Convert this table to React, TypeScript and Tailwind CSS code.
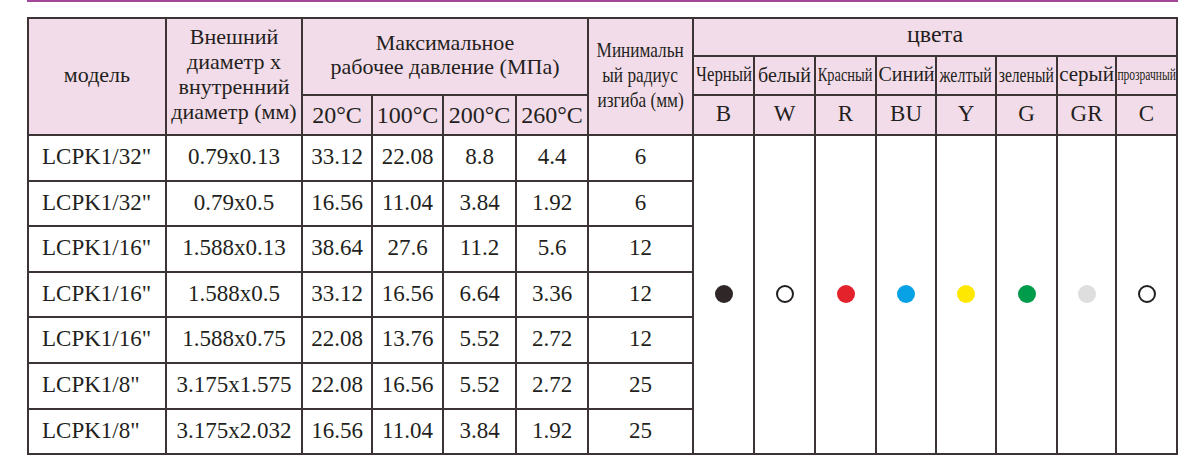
import React from 'react';

const rows = [
    ['LCPK1/32"', '0.79x0.13', '33.12', '22.08', '8.8', '4.4', '6'],
    ['LCPK1/32"', '0.79x0.5', '16.56', '11.04', '3.84', '1.92', '6'],
    ['LCPK1/16"', '1.588x0.13', '38.64', '27.6', '11.2', '5.6', '12'],
    ['LCPK1/16"', '1.588x0.5', '33.12', '16.56', '6.64', '3.36', '12'],
    ['LCPK1/16"', '1.588x0.75', '22.08', '13.76', '5.52', '2.72', '12'],
    ['LCPK1/8"', '3.175x1.575', '22.08', '16.56', '5.52', '2.72', '25'],
    ['LCPK1/8"', '3.175x2.032', '16.56', '11.04', '3.84', '1.92', '25'],
];

const rowHeights = ['h-[46px]', 'h-[45px]', 'h-[46px]', 'h-[45px]', 'h-[46px]', 'h-[46px]', 'h-[45px]'];

const colors = [
    { name: 'Черный', cls: 'text-[21px] scale-x-[0.8]', code: 'B', dot: 'bg-[#2f2727]' },
    { name: 'белый', cls: 'text-[20px] scale-x-[1]', code: 'W', dot: 'bg-white border-2 border-[#231f20]' },
    { name: 'Красный', cls: 'text-[19px] scale-x-[0.76]', code: 'R', dot: 'bg-[#e4222c]' },
    { name: 'Синий', cls: 'text-[21px] scale-x-[0.95]', code: 'BU', dot: 'bg-[#07a2e5]' },
    { name: 'желтый', cls: 'text-[20px] scale-x-[0.8]', code: 'Y', dot: 'bg-[#ffe800]' },
    { name: 'зеленый', cls: 'text-[20px] scale-x-[0.78]', code: 'G', dot: 'bg-[#009b4b]' },
    { name: 'серый', cls: 'text-[21px] scale-x-[1]', code: 'GR', dot: 'bg-[#dedede]' },
    { name: 'прозрачный', cls: 'text-[16px] scale-x-[0.72]', code: 'C', dot: 'bg-white border-2 border-[#231f20]' },
];

const cell = 'border-2 border-[#3b3334] text-center align-middle p-0';
const head = `${cell} bg-[#f3dce9]`;

function Squeeze({ children, cls }: { children: React.ReactNode; cls: string }) {
    return (
        <div className="flex justify-center overflow-visible">
            <span className={`inline-block whitespace-nowrap ${cls}`}>{children}</span>
        </div>
    );
}

export default function App() {
    return (
        <div className="w-[1200px] h-[469px] bg-white font-[family-name:'Liberation_Serif',serif] text-[#231f20] overflow-hidden">
            <div className="ml-[27px] w-[1151px] h-[1.5px] bg-[#a3479a]" />
            <table className="ml-[27px] mt-[15px] w-[1151px] table-fixed border-collapse">
                <colgroup>
                    <col className="w-[138px]" />
                    <col className="w-[136px]" />
                    <col className="w-[70px]" />
                    <col className="w-[71px]" />
                    <col className="w-[73px]" />
                    <col className="w-[72px]" />
                    <col className="w-[105px]" />
                    <col className="w-[61px]" />
                    <col className="w-[61px]" />
                    <col className="w-[61px]" />
                    <col className="w-[60px]" />
                    <col className="w-[60px]" />
                    <col className="w-[61px]" />
                    <col className="w-[59px]" />
                    <col className="w-[61px]" />
                </colgroup>
                <thead>
                    <tr className="h-[38px]">
                        <th rowSpan={3} className={`${head} text-[22px] font-normal pb-[4px]`}>модель</th>
                        <th rowSpan={3} className={`${head} text-[22px] font-normal leading-[25px] pb-[4px]`}>
                            <Squeeze cls="">Внешний</Squeeze>
                            <Squeeze cls="">диаметр х</Squeeze>
                            <Squeeze cls="">внутренний</Squeeze>
                            <Squeeze cls="">диаметр (мм)</Squeeze>
                        </th>
                        <th colSpan={4} rowSpan={2} className={`${head} text-[22px] font-normal leading-[24px] pb-[2px]`}>
                            Максимальное<br />рабочее давление (МПа)
                        </th>
                        <th rowSpan={3} className={`${head} font-normal leading-[25px] pb-[2px]`}>
                            <Squeeze cls="text-[21px] scale-x-[0.82]">Минимальн</Squeeze>
                            <Squeeze cls="text-[21px] scale-x-[0.82]">ый радиус</Squeeze>
                            <Squeeze cls="text-[21px] scale-x-[0.82]">изгиба (мм)</Squeeze>
                        </th>
                        <th colSpan={8} className={`${head} text-[24px] font-normal leading-[28px] pb-[5px]`}>цвета</th>
                    </tr>
                    <tr className="h-[39px]">
                        {colors.map((c) => (
                            <th key={c.name} className={`${head} font-normal`}>
                                <Squeeze cls={c.cls}>{c.name}</Squeeze>
                            </th>
                        ))}
                    </tr>
                    <tr className="h-[40px]">
                        {['20°C', '100°C', '200°C', '260°C'].map((t) => (
                            <th key={t} className={`${head} text-[24px] font-normal`}>
                                <Squeeze cls="">{t}</Squeeze>
                            </th>
                        ))}
                        {colors.map((c) => (
                            <th key={c.code} className={`${head} text-[23px] font-normal`}>{c.code}</th>
                        ))}
                    </tr>
                </thead>
                <tbody>
                    {rows.map((r, i) => (
                        <tr key={i} className={rowHeights[i]}>
                            {r.map((v, j) => (
                                <td key={j} className={`${cell} text-[23px] ${j === 0 ? 'text-left pl-[13px]' : ''}`}>{v}</td>
                            ))}
                            {i === 0 &&
                                colors.map((c) => (
                                    <td key={c.code} rowSpan={7} className={cell}>
                                        <div className="flex justify-center">
                                            <span className={`block w-[18px] h-[18px] rounded-full ${c.dot}`} />
                                        </div>
                                    </td>
                                ))}
                        </tr>
                    ))}
                </tbody>
            </table>
        </div>
    );
}
